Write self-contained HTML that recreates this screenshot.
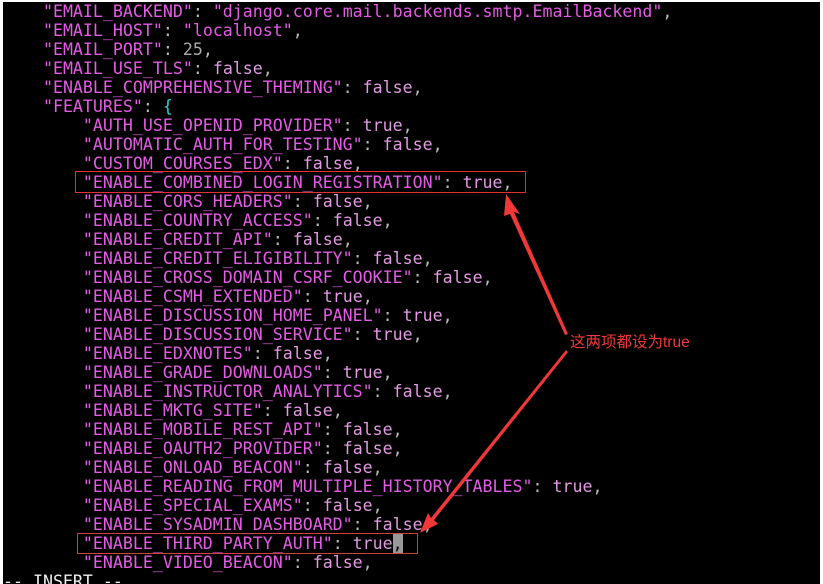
<!DOCTYPE html>
<html><head><meta charset="utf-8"><style>
html,body{margin:0;padding:0;background:#fff;width:823px;height:584px;overflow:hidden}
#term{position:absolute;left:3px;top:2px;width:817px;height:582px;background:#000;overflow:hidden}
pre{margin:0;position:absolute;left:0;top:0;font-family:"DejaVu Sans Mono","Liberation Mono",monospace;font-size:16.6px;line-height:19px;color:#e35ce3;white-space:pre}
.v{color:#e29be2}.p{color:#bbb}.n{color:#aaa}.c{color:#3cd}.w{color:#eee}
.cur{background:#999;color:#000}
</style></head><body>
<div id="term"><pre>    "EMAIL_BACKEND"<span class="p">:</span> "django.core.mail.backends.smtp.EmailBackend"<span class="p">,</span>
    "EMAIL_HOST"<span class="p">:</span> "localhost"<span class="p">,</span>
    "EMAIL_PORT"<span class="p">:</span> <span class="n">25</span><span class="p">,</span>
    "EMAIL_USE_TLS"<span class="p">:</span> <span class="v">false</span><span class="p">,</span>
    "ENABLE_COMPREHENSIVE_THEMING"<span class="p">:</span> <span class="v">false</span><span class="p">,</span>
    "FEATURES"<span class="p">:</span> <span class="c">{</span>
        "AUTH_USE_OPENID_PROVIDER"<span class="p">:</span> <span class="v">true</span><span class="p">,</span>
        "AUTOMATIC_AUTH_FOR_TESTING"<span class="p">:</span> <span class="v">false</span><span class="p">,</span>
        "CUSTOM_COURSES_EDX"<span class="p">:</span> <span class="v">false</span><span class="p">,</span>
        "ENABLE_COMBINED_LOGIN_REGISTRATION"<span class="p">:</span> <span class="v">true</span><span class="p">,</span>
        "ENABLE_CORS_HEADERS"<span class="p">:</span> <span class="v">false</span><span class="p">,</span>
        "ENABLE_COUNTRY_ACCESS"<span class="p">:</span> <span class="v">false</span><span class="p">,</span>
        "ENABLE_CREDIT_API"<span class="p">:</span> <span class="v">false</span><span class="p">,</span>
        "ENABLE_CREDIT_ELIGIBILITY"<span class="p">:</span> <span class="v">false</span><span class="p">,</span>
        "ENABLE_CROSS_DOMAIN_CSRF_COOKIE"<span class="p">:</span> <span class="v">false</span><span class="p">,</span>
        "ENABLE_CSMH_EXTENDED"<span class="p">:</span> <span class="v">true</span><span class="p">,</span>
        "ENABLE_DISCUSSION_HOME_PANEL"<span class="p">:</span> <span class="v">true</span><span class="p">,</span>
        "ENABLE_DISCUSSION_SERVICE"<span class="p">:</span> <span class="v">true</span><span class="p">,</span>
        "ENABLE_EDXNOTES"<span class="p">:</span> <span class="v">false</span><span class="p">,</span>
        "ENABLE_GRADE_DOWNLOADS"<span class="p">:</span> <span class="v">true</span><span class="p">,</span>
        "ENABLE_INSTRUCTOR_ANALYTICS"<span class="p">:</span> <span class="v">false</span><span class="p">,</span>
        "ENABLE_MKTG_SITE"<span class="p">:</span> <span class="v">false</span><span class="p">,</span>
        "ENABLE_MOBILE_REST_API"<span class="p">:</span> <span class="v">false</span><span class="p">,</span>
        "ENABLE_OAUTH2_PROVIDER"<span class="p">:</span> <span class="v">false</span><span class="p">,</span>
        "ENABLE_ONLOAD_BEACON"<span class="p">:</span> <span class="v">false</span><span class="p">,</span>
        "ENABLE_READING_FROM_MULTIPLE_HISTORY_TABLES"<span class="p">:</span> <span class="v">true</span><span class="p">,</span>
        "ENABLE_SPECIAL_EXAMS"<span class="p">:</span> <span class="v">false</span><span class="p">,</span>
        "ENABLE_SYSADMIN_DASHBOARD"<span class="p">:</span> <span class="v">false</span><span class="p">,</span>
        "ENABLE_THIRD_PARTY_AUTH"<span class="p">:</span> <span class="v">true</span><span class="cur">,</span>
        "ENABLE_VIDEO_BEACON"<span class="p">:</span> <span class="v">false</span><span class="p">,</span>
<span class="w">-- INSERT --</span></pre></div>
<svg width="823" height="584" style="position:absolute;left:0;top:0">
<rect x="75.5" y="171.5" width="450" height="21" fill="none" stroke="#e53030" stroke-width="1"/>
<rect x="77.5" y="533.5" width="340" height="20" fill="none" stroke="#d04040" stroke-width="1"/>
<polygon points="506,194 520,214 514,212 568,334 565,335 510,214 504,216" fill="#f03838"/>
<polygon points="420,533 428,513 431,518 566,350 568,352 434,520 438,524" fill="#f03838"/>
<text x="570" y="347" font-family="Liberation Sans,Noto Sans CJK SC,sans-serif" font-size="15.5" fill="#f03838">这两项都设为true</text>
</svg>
</body></html>
